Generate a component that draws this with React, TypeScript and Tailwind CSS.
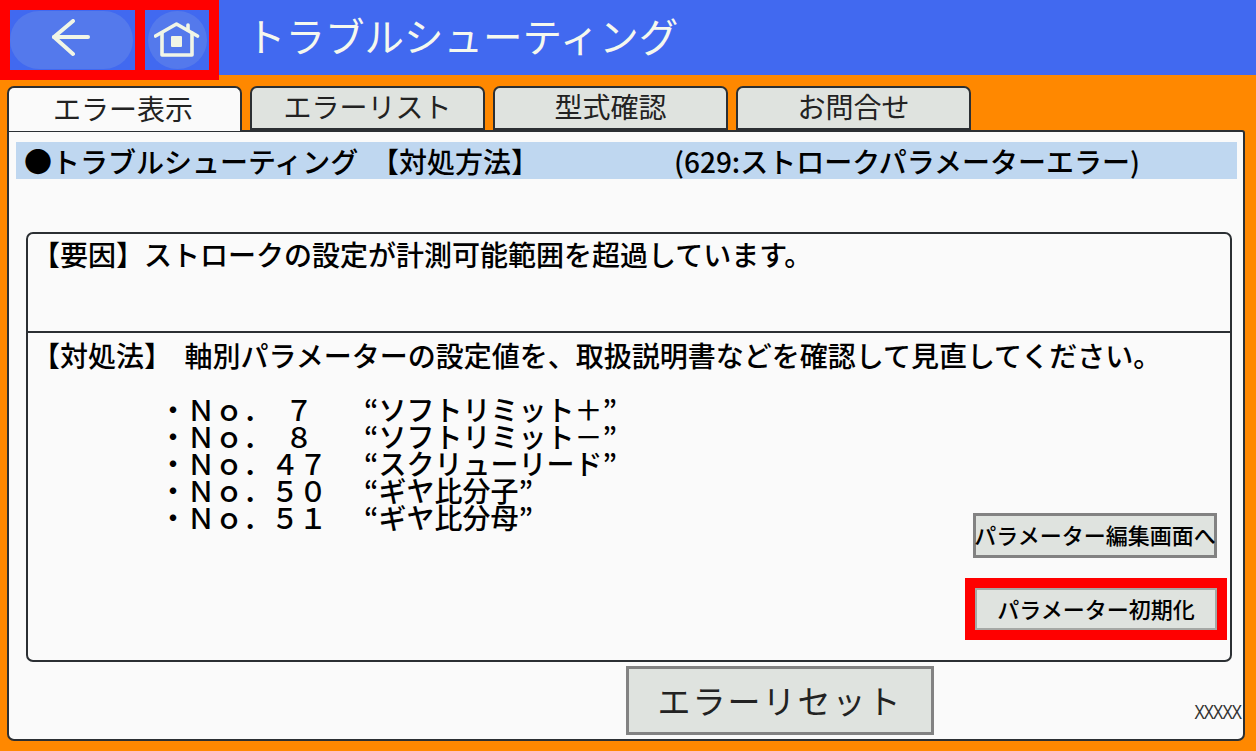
const font = '[font-family:"Noto_Sans_CJK_JP","Liberation_Sans",sans-serif]'

const tabs = [
  { label: 'エラー表示', active: true },
  { label: 'エラーリスト', active: false },
  { label: '型式確認', active: false },
  { label: 'お問合せ', active: false },
]

const parameters = [
  { no: '・Ｎｏ．　７', name: '“ソフトリミット＋”' },
  { no: '・Ｎｏ．　８', name: '“ソフトリミット－”' },
  { no: '・Ｎｏ．４７', name: '“スクリューリード”' },
  { no: '・Ｎｏ．５０', name: '“ギヤ比分子”' },
  { no: '・Ｎｏ．５１', name: '“ギヤ比分母”' },
]

function BackIcon() {
  return (
    <svg width="42" height="42" viewBox="0 0 42 42" fill="none" stroke="#f1f5e6" strokeWidth="4" strokeLinecap="round" strokeLinejoin="round">
      <path d="M37 18H3" />
      <path d="M22 2L3 18l19 17" />
    </svg>
  )
}

function HomeIcon() {
  return (
    <svg width="46" height="36" viewBox="0 0 46 36" fill="none" stroke="#f1f5e6" strokeWidth="3.6" strokeLinejoin="round" strokeLinecap="round">
      <path d="M1.5 14L22.5 2l21 12" />
      <path d="M34 8V3" />
      <path d="M8 11v22h30V11" />
      <rect x="17" y="14" width="11" height="11" rx="1" fill="#f1f5e6" stroke="none" />
    </svg>
  )
}

export default function App() {
  return (
    <div className={`${font} w-[1256px] h-[751px] overflow-hidden bg-[#ff8800] flex flex-col text-black`}>
      <header className="h-[75px] shrink-0 bg-[#4169f0] flex">
        <div className="h-[80px] w-[219px] shrink-0 bg-[#ff0000] p-[10px] flex gap-[10px] relative z-10">
          <button className="w-[126px] h-[60px] bg-[#4169f0] flex items-center justify-start">
            <div className="w-[123px] h-[58px] rounded-[29px] bg-[#5479ec] flex items-center justify-center">
              <BackIcon />
            </div>
          </button>
          <button className="w-[64px] h-[60px] bg-[#4169f0] flex items-center justify-center">
            <div className="w-[59px] h-[58px] rounded-full bg-[#5479ec] flex items-center justify-center">
              <HomeIcon />
            </div>
          </button>
        </div>
        <h1 className="ml-[27px] h-[75px] leading-[70px] text-[39.5px] font-normal text-[#f5f8ee]">トラブルシューティング</h1>
      </header>

      <div className="flex-1 pt-[11px] pl-[7px] pr-[11px] pb-[10px] flex flex-col">
        <nav className="h-[45px] shrink-0 flex gap-[8px] relative z-[1]">
          {tabs.map((tab) => (
            <div
              key={tab.label}
              className={`w-[235px] pb-[4px] rounded-t-[7px] border-2 border-[#2b2f33] flex items-center justify-center text-[28px] text-[#222] ${
                tab.active ? 'h-[45px] pr-[3px] border-b-0 bg-[#fafafa]' : 'h-[44px] bg-[#dfe3df]'
              }`}
            >
              {tab.label}
            </div>
          ))}
        </nav>

        <main className="flex-1 -mt-[1px] rounded-b-[7px] rounded-tr-[3px] border-2 border-[#2b2f33] bg-[#fafafa] pt-[10px] pl-[7px] pr-[6px] flex flex-col">
          <div className="h-[37px] shrink-0 bg-[#bfd7f0] flex items-center text-[28px] leading-none font-medium">
            <div className="w-[654px] pl-[8px] whitespace-pre">●トラブルシューティング  【対処方法】</div>
            <div className="flex-1 pl-[4px] whitespace-pre">(629:ストロークパラメーターエラー)</div>
          </div>

          <section className="mt-[53px] ml-[10px] mr-[5px] h-[430px] shrink-0 rounded-[7px] border-2 border-[#2b2f33] flex flex-col">
            <div className="h-[99px] shrink-0 border-b-2 border-[#2b2f33] pl-[4px] text-[28px] leading-[40px] font-medium whitespace-pre">
              【要因】ストロークの設定が計測可能範囲を超過しています。
            </div>
            <div className="flex-1 flex flex-col pl-[4px] relative">
              <p className="pt-[2px] text-[28px] leading-[40px] font-medium whitespace-pre">【対処法】  軸別パラメーターの設定値を、取扱説明書などを確認して見直してください。</p>
              <ul className="mt-[21px] ml-[127px] text-[28px] leading-[27px] font-medium">
                {parameters.map((p) => (
                  <li key={p.no} className="flex h-[27px] whitespace-pre">
                    <span className="w-[205px]">{p.no}</span>
                    <span>{p.name}</span>
                  </li>
                ))}
              </ul>
              <div className="absolute right-[13px] bottom-[20px] flex flex-col items-end">
                <button className="w-[244px] h-[45px] pb-[3px] border-[3px] border-[#828282] bg-[#dfe3df] text-[22px] leading-none font-medium whitespace-nowrap flex items-center justify-center">
                  パラメーター編集画面へ
                </button>
                <div className="mt-[20px] mr-[-10px] w-[262px] h-[62px] bg-[#ff0000] p-[10px]">
                  <button className="w-full h-full pb-[3px] border-2 border-[#a5a8a5] bg-[#dfe3df] text-[22px] leading-none font-medium flex items-center justify-center">
                    パラメーター初期化
                  </button>
                </div>
              </div>
            </div>
          </section>

          <div className="flex-1 relative flex justify-start pl-[610px] pt-[4px]">
            <button className="w-[308px] h-[69px] border-[3px] border-[#828282] bg-[#dfe3df] text-[33px] text-[#222] tracking-[2px] flex items-center justify-center">
              エラーリセット
            </button>
            <span className="absolute right-[-4px] bottom-[18px] scale-y-125 font-['Liberation_Sans',sans-serif] text-[16px] leading-none tracking-[-1.3px] text-[#333]">XXXXX</span>
          </div>
        </main>
      </div>
    </div>
  )
}
